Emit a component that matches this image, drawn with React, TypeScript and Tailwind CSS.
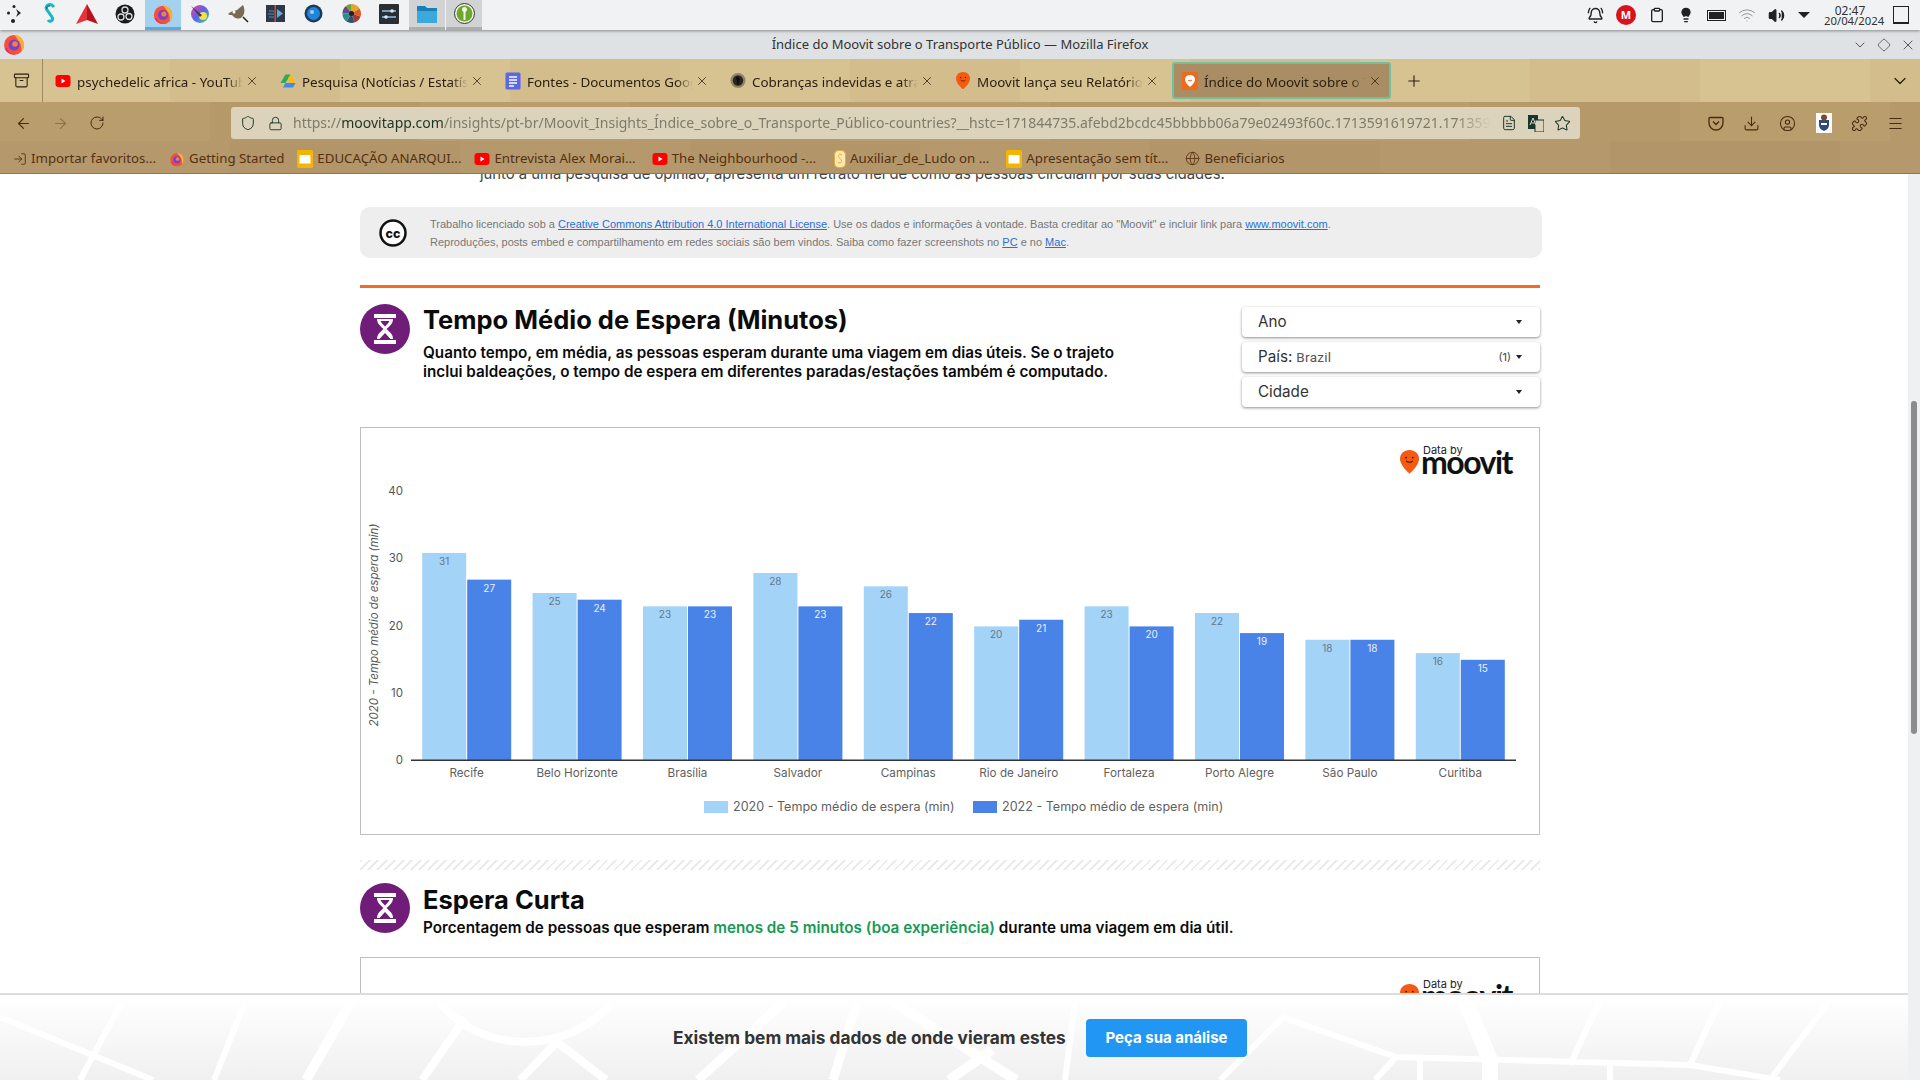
import type { ReactNode } from 'react';
import {
  ArrowLeft, ArrowRight, RotateCw, Shield, Lock, FileText, Star, Download, CircleUser, Puzzle, Menu, Plus, X,
  ChevronDown, Globe, BellRing, Clipboard, Lightbulb, Wifi, Volume2, LogIn, Archive, Diamond,
} from 'lucide-react';

const cities = [
  { name: 'Recife', a: 31, b: 27 },
  { name: 'Belo Horizonte', a: 25, b: 24 },
  { name: 'Brasília', a: 23, b: 23 },
  { name: 'Salvador', a: 28, b: 23 },
  { name: 'Campinas', a: 26, b: 22 },
  { name: 'Rio de Janeiro', a: 20, b: 21 },
  { name: 'Fortaleza', a: 23, b: 20 },
  { name: 'Porto Alegre', a: 22, b: 19 },
  { name: 'São Paulo', a: 18, b: 18 },
  { name: 'Curitiba', a: 16, b: 15 },
];

function FirefoxIcon({ size = 22 }: { size?: number }) {
  return (
    <svg width={size} height={size} viewBox="0 0 24 24">
      <circle cx="12" cy="13" r="10" fill="#f4503c" />
      <path d="M12 3c5 0 10 4 10 10 0 3-1 5-3 7 1-4 0-9-3-12-1-2-2-3-4-5z" fill="#ffb02e" />
      <path d="M3 17c2 4 6 6 10 5-4 0-7-2-8-6z" fill="#e0267f" />
      <circle cx="12" cy="13" r="5.5" fill="#7b3fd0" />
      <circle cx="13" cy="12" r="2.8" fill="#f0833a" />
    </svg>
  );
}

function YoutubeIcon() {
  return (
    <svg width="16" height="16" viewBox="0 0 16 16">
      <rect x="0.5" y="2" width="15" height="12" rx="3" fill="#f00" />
      <path d="M6.5 5.5v5l4-2.5z" fill="#fff" />
    </svg>
  );
}

function DriveIcon() {
  return (
    <svg width="16" height="16" viewBox="0 0 16 16">
      <path d="M5.5 1.5h5l-5 8.5h-5z" fill="#34a853" />
      <path d="M10.5 1.5l5 8.5h-5l-2.5-4.2z" fill="#fbbc04" />
      <path d="M3 14.5l2.5-4.5h10l-2.5 4.5z" fill="#4285f4" />
    </svg>
  );
}

function DocsIcon() {
  return (
    <svg width="16" height="18" viewBox="0 0 16 18">
      <rect x="0.5" y="0.5" width="15" height="17" rx="1.5" fill="#5a67e8" />
      <path d="M4 5h8M4 8h8M4 11h8M4 14h5" stroke="#fff" strokeWidth="1.4" />
    </svg>
  );
}

function SlidesIcon() {
  return (
    <svg width="16" height="18" viewBox="0 0 16 18">
      <rect x="0" y="0" width="16" height="18" rx="1.5" fill="#f4b400" />
      <rect x="2.5" y="5" width="11" height="8.5" fill="#fff" />
    </svg>
  );
}

function PinIcon({ size = 16 }: { size?: number }) {
  return (
    <svg width={size} height={size * 1.25} viewBox="0 0 20 25">
      <path d="M10 0c5.600 0 10 4 10 9.200 0 5.500-5 11-10 15.800C5 20.200 0 14.700 0 9.200 0 4 4.400 0 10 0z" fill="#f55a12" />
      <circle cx="6.500" cy="8" r="1" fill="#40170a" />
      <circle cx="13.500" cy="8" r="1" fill="#40170a" />
      <path d="M6.500 11.500c2 2 5 2 7 0" stroke="#40170a" strokeWidth="1.100" fill="none" />
    </svg>
  );
}

function PinTileIcon() {
  return (
    <svg width="16" height="18" viewBox="0 0 16 18">
      <rect width="16" height="18" rx="1" fill="#ef6a1c" />
      <path d="M8 3c2.800 0 5 2 5 4.600 0 2.800-2.500 5.400-5 7.400-2.500-2-5-4.600-5-7.400C3 5 5.200 3 8 3z" fill="#fff" />
      <path d="M6 8c1 1 3 1 4 0" stroke="#ef6a1c" fill="none" />
    </svg>
  );
}

function SpiralIcon() {
  return (
    <svg width="17" height="17" viewBox="0 0 17 17">
      <circle cx="8.500" cy="8.500" r="8" fill="#8d8468" />
      <circle cx="8.500" cy="8.500" r="5.500" fill="#2b2520" />
      <path d="M6.500 5c2-1.500 4 0 3.500 2.500L9 13H8L7 8z" fill="#0b0b0b" />
    </svg>
  );
}

function Taskbar() {
  const Slot = ({ children, state }: { children: ReactNode; state?: 'active' | 'open' }) => (
    <div
      className={`flex h-[30px] w-[36px] items-center justify-center border-b-[3px] mr-[1.700px] ${
        state === 'active'
          ? 'bg-[#a4d1ee] border-b-[#5aa9e0]'
          : state === 'open'
            ? 'bg-[#d2d3d5] border-b-[#adaeb0]'
            : 'border-b-transparent'
      }`}
    >
      {children}
    </div>
  );

  return (
    <div className="relative z-10 flex h-[30px] shrink-0 items-center justify-between bg-[#f1f2f3] shadow-[0_1px_3px_rgba(0,0,0,0.4)]">
      <div className="-ml-[6px] flex items-center">
        <Slot>
          <svg width="18" height="20" viewBox="0 0 18 20" fill="#222" className="ml-[5px]">
            <circle cx="8" cy="2.500" r="1.500" />
            <circle cx="2.500" cy="9" r="1.500" />
            <circle cx="7" cy="17" r="2" />
            <path d="M10 5l5 4-5 4 1.800-4z" />
          </svg>
        </Slot>
        <Slot>
          <svg width="14" height="22" viewBox="0 0 14 22" fill="none">
            <path d="M11 4C7-1 1 3 4 7l5 7c2 3-2 6-4 3" stroke="#14b8c9" strokeWidth="3" />
            <path d="M4 6c-1-2 1-3 3-3" stroke="#0a4f5c" strokeWidth="1" />
          </svg>
        </Slot>
        <Slot>
          <svg width="22" height="20" viewBox="0 0 22 20">
            <path d="M11 0l11 20-11-4z" fill="#b3141d" />
            <path d="M11 0L0 20l11-4z" fill="#e2343a" />
          </svg>
        </Slot>
        <Slot>
          <svg width="20" height="20" viewBox="0 0 20 20">
            <circle cx="10" cy="10" r="9.500" fill="#1b1b1b" />
            <circle cx="10" cy="6" r="3" fill="none" stroke="#ddd" strokeWidth="1.300" />
            <circle cx="6" cy="13" r="3" fill="none" stroke="#ddd" strokeWidth="1.300" />
            <circle cx="14" cy="12.500" r="3" fill="none" stroke="#ddd" strokeWidth="1.300" />
          </svg>
        </Slot>
        <Slot state="active">
          <FirefoxIcon />
        </Slot>
        <Slot>
          <svg width="20" height="20" viewBox="0 0 20 20">
            <defs>
              <linearGradient id="krita" x1="0" y1="0" x2="1" y2="1">
                <stop offset="0" stopColor="#f13fa0" />
                <stop offset="0.5" stopColor="#5c62e8" />
                <stop offset="1" stopColor="#33d9a5" />
              </linearGradient>
            </defs>
            <circle cx="10" cy="10" r="9" fill="url(#krita)" />
            <circle cx="13" cy="12" r="4" fill="#f4e24a" />
            <path d="M1 2l11 9-2 2z" fill="#4a3a3a" />
          </svg>
        </Slot>
        <Slot>
          <svg width="22" height="18" viewBox="0 0 22 18">
            <path d="M1 9c3-3 6-3 9-4l6-5c2 4 2 9-1 12-4 3-8 1-10-2-2 0-3 0-4-1z" fill="#7a6a52" />
            <circle cx="7" cy="7" r="1.500" fill="#fff" />
            <path d="M16 12l5 5" stroke="#222" strokeWidth="1.500" />
          </svg>
        </Slot>
        <Slot>
          <svg width="19" height="17" viewBox="0 0 19 17">
            <rect width="19" height="17" fill="#2b3a48" />
            <path d="M11 4l6 4.500-6 4.500z" fill="#6ea4cf" />
            <path d="M3 6h5M2 9h6M3 12h5" stroke="#5f89ab" />
            <rect x="8.500" y="0" width="1.500" height="17" fill="#d8483d" />
          </svg>
        </Slot>
        <Slot>
          <svg width="19" height="19" viewBox="0 0 19 19">
            <circle cx="9.500" cy="9.500" r="9" fill="#1d3a57" />
            <circle cx="9.500" cy="9.500" r="6.500" fill="#1f86d8" />
            <circle cx="8" cy="8" r="2" fill="#9ccfee" />
          </svg>
        </Slot>
        <Slot>
          <svg width="19" height="19" viewBox="0 0 19 19">
            <path d="M9.500 9.500L9.500 0a9.500 9.500 0 0 1 8 4.500z" fill="#e4a52c" />
            <path d="M9.500 9.500l8-5a9.500 9.500 0 0 1 1 8z" fill="#df5b2b" />
            <path d="M9.500 9.500l9 3a9.500 9.500 0 0 1-6 6z" fill="#a13b3b" />
            <path d="M9.500 9.500l3 9a9.500 9.500 0 0 1-8-1z" fill="#33506f" />
            <path d="M9.500 9.500l-5 8a9.500 9.500 0 0 1-4-8z" fill="#2d8c8c" />
            <path d="M9.500 9.500H.500A9.500 9.500 0 0 1 4 2z" fill="#5d4a87" />
            <path d="M9.500 9.500L4 2a9.500 9.500 0 0 1 5.500-2z" fill="#7a9a3f" />
            <circle cx="9.500" cy="9.500" r="2.500" fill="#222" />
          </svg>
        </Slot>
        <Slot>
          <svg width="20" height="20" viewBox="0 0 20 20">
            <rect width="20" height="20" rx="1" fill="#2a2e33" />
            <path d="M3 7h14M3 13h14" stroke="#8fc4ea" strokeWidth="1.500" />
            <circle cx="13" cy="7" r="1.800" fill="#dbe9f3" />
            <circle cx="7" cy="13" r="1.800" fill="#dbe9f3" />
          </svg>
        </Slot>
        <Slot state="open">
          <svg width="20" height="18" viewBox="0 0 20 18">
            <path d="M0 1h8l2 2h10v15H0z" fill="#1a7fb8" />
            <path d="M0 6h20v12H0z" fill="#3ba9dc" />
          </svg>
        </Slot>
        <Slot state="open">
          <svg width="21" height="21" viewBox="0 0 21 21">
            <circle cx="10.500" cy="10.500" r="10" fill="#f3f5ed" stroke="#2a3a2a" />
            <circle cx="10.500" cy="10.500" r="8" fill="#6da72c" />
            <circle cx="10.500" cy="6.500" r="2.500" fill="#f3f5ed" />
            <rect x="9.500" y="8" width="2" height="9" fill="#f3f5ed" />
          </svg>
        </Slot>
      </div>
      <div className="flex h-full items-center text-[#222]">
        <BellRing size={17} className="absolute left-[1587px]" />
        <div className="absolute left-[1616px] flex h-[20px] w-[20px] items-center justify-center rounded-full bg-[#d9131d] text-[11px] font-bold text-white">M</div>
        <Clipboard size={16} className="absolute left-[1649px]" />
        <Lightbulb size={16} fill="#222" className="absolute left-[1678px]" />
        <div className="absolute left-[1707px] h-[11px] w-[19px] border border-[#222] bg-[#222] shadow-[inset_0_0_0_1px_#f1f2f3]" />
        <Wifi size={18} strokeWidth={1} className="absolute left-[1738px] text-[#777]" />
        <Volume2 size={17} fill="#222" className="absolute left-[1768px]" />
        <div className="absolute left-[1798px] h-0 w-0 border-x-[6px] border-t-[6px] border-x-transparent border-t-[#222]" />
        <div className="absolute left-[1824px] top-[6px] w-[52px] text-center leading-[10px] text-[#333]">
          <div className="text-[12px]">02:47</div>
          <div className="text-[11.300px]">20/04/2024</div>
        </div>
        <div className="absolute left-[1893px] h-[18px] w-[16px] border border-[#222] border-b-2" />
      </div>
    </div>
  );
}

function TitleBar() {
  return (
    <div className="relative flex h-[29px] shrink-0 items-center justify-center bg-[#dfe2e4] text-[13px] text-[#333]">
      <div className="absolute left-[2px] top-[2px]">
        <FirefoxIcon size={24} />
      </div>
      Índice do Moovit sobre o Transporte Público — Mozilla Firefox
      <div className="absolute right-[4px] flex items-center gap-[9px] text-[#444]">
        <ChevronDown size={16} strokeWidth={1.300} />
        <Diamond size={14} strokeWidth={1.300} />
        <X size={16} strokeWidth={1.300} />
      </div>
    </div>
  );
}

const tabs = [
  { title: 'psychedelic africa - YouTube', icon: <YoutubeIcon /> },
  { title: 'Pesquisa (Notícias / Estatísticas)', icon: <DriveIcon /> },
  { title: 'Fontes - Documentos Google', icon: <DocsIcon /> },
  { title: 'Cobranças indevidas e atrasos', icon: <SpiralIcon /> },
  { title: 'Moovit lança seu Relatório Global', icon: <PinIcon size={14} /> },
  { title: 'Índice do Moovit sobre o Transporte', icon: <PinTileIcon />, active: true },
];

function TabBar() {
  return (
    <div className="flex h-[43px] shrink-0 items-center bg-[#d6c08f] bg-[repeating-linear-gradient(90deg,rgba(255,255,255,0.03)_0,rgba(255,255,255,0.03)_170px,rgba(120,90,30,0.03)_170px,rgba(120,90,30,0.03)_340px)] text-[13.400px] text-[#2b2112]">
      <div className="flex h-full w-[43px] items-center justify-center border-r border-r-[#9b8a62]">
        <Archive size={17} strokeWidth={1.500} />
      </div>
      <div className="flex items-center gap-[6px] pl-[4px]">
        {tabs.map((tab) => (
          <div
            key={tab.title}
            className={`flex h-[37px] w-[219px] items-center rounded-[3px] pl-[8px] pr-[7px] ${
              tab.active ? 'border-2 border-[#6fc0a0] bg-[#ab8d63] pl-[6px] pr-[5px]' : ''
            }`}
          >
            <span className="flex w-[16px] shrink-0 justify-center">{tab.icon}</span>
            <span className="ml-[6px] min-w-0 flex-1 overflow-hidden whitespace-nowrap pt-[4px] [mask-image:linear-gradient(90deg,#000_90%,transparent)]">
              {tab.title}
            </span>
            <X size={14} strokeWidth={1.300} className="ml-[2px] shrink-0" />
          </div>
        ))}
      </div>
      <Plus size={18} strokeWidth={1.500} className="ml-[14px]" />
      <div className="flex-1" />
      <ChevronDown size={20} strokeWidth={1.500} className="mr-[10px]" />
    </div>
  );
}

function NavBar() {
  return (
    <div className="flex h-[39px] shrink-0 items-center bg-[#b89b6a] bg-[repeating-linear-gradient(90deg,rgba(255,255,255,0.02)_0,rgba(255,255,255,0.02)_210px,rgba(90,60,20,0.02)_210px,rgba(90,60,20,0.02)_420px)] pt-[3px] text-[#4a2a10]">
      <div className="flex w-[231px] shrink-0 items-center gap-[20px] pl-[15px]">
        <ArrowLeft size={17} strokeWidth={1.500} />
        <ArrowRight size={17} strokeWidth={1.500} className="opacity-40" />
        <RotateCw size={16} strokeWidth={1.500} />
      </div>
      <div className="flex h-[32px] w-[1349px] shrink-0 items-center rounded-[3px] bg-[#dbd3bb] pl-[9px] pr-[6px] text-[#24382c]">
        <Shield size={16} strokeWidth={1.500} />
        <Lock size={15} strokeWidth={1.500} className="ml-[12px]" />
        <span className="ml-[10px] w-[1198px] overflow-hidden whitespace-nowrap pb-[2px] text-[14px] text-[#7f7b6a] [mask-image:linear-gradient(90deg,#000_97%,transparent)]">
          https://<span className="text-[#1f3327]">moovitapp.com</span>/insights/pt-br/Moovit_Insights_Índice_sobre_o_Transporte_Público-countries?__hstc=171844735.afebd2bcdc45bbbbb06a79e02493f60c.1713591619721.1713591619721
        </span>
        <FileText size={16} strokeWidth={1.500} className="ml-[10px]" />
        <svg width="16" height="17" viewBox="0 0 16 17" className="ml-[11px]">
          <rect x="0" y="0" width="10" height="14" fill="#17362c" />
          <rect x="7" y="5" width="9" height="12" fill="#dbd3bb" stroke="#17362c" />
          <path d="M2 10l3-7 3 7M3.200 8h3.600" stroke="#dbd3bb" strokeWidth="1" fill="none" />
        </svg>
        <Star size={17} strokeWidth={1.500} className="ml-[10px]" />
      </div>
      <div className="flex flex-1 items-center justify-between pl-[128px] pr-[16px]">
        <svg width="16" height="16" viewBox="0 0 16 16" fill="none" stroke="currentColor" strokeWidth="1.300">
          <path d="M2 2.500h12a1 1 0 0 1 1 1V8A7 7 0 0 1 1 8V3.500a1 1 0 0 1 1-1z" />
          <path d="M5 6.500l3 3 3-3" />
        </svg>
        <Download size={17} strokeWidth={1.500} />
        <CircleUser size={17} strokeWidth={1.500} />
        <svg width="16" height="20" viewBox="0 0 16 20">
          <rect width="16" height="20" fill="#fff" />
          <path d="M3 7h10v5c0 3-2 5-5 6-3-1-5-3-5-6z" fill="#2f4a78" />
          <circle cx="8" cy="4.500" r="3" fill="#7a4a2a" />
          <rect x="5" y="10" width="6" height="2" fill="#fff" />
        </svg>
        <Puzzle size={17} strokeWidth={1.500} />
        <Menu size={17} strokeWidth={1.500} />
      </div>
    </div>
  );
}

const bookmarks = [
  { title: 'Importar favoritos...', icon: <LogIn size={14} strokeWidth={1.500} />, gap: '' },
  { title: 'Getting Started', icon: <FirefoxIcon size={16} />, gap: '' },
  { title: 'EDUCAÇÃO ANARQUI...', icon: <SlidesIcon />, gap: '' },
  { title: 'Entrevista Alex Morai...', icon: <YoutubeIcon />, gap: '' },
  { title: 'The Neighbourhood -...', icon: <YoutubeIcon />, gap: 'ml-[3px]' },
  {
    title: 'Auxiliar_de_Ludo on ...',
    icon: (
      <svg width="12" height="18" viewBox="0 0 12 18">
        <rect x="0.500" y="0.500" width="11" height="17" rx="4" fill="#fbe9b0" stroke="#e8a93c" />
        <path d="M8 5C5 3 3 6 6 8.500s1 5.500-2 4" stroke="#e8a93c" fill="none" />
      </svg>
    ),
    gap: 'ml-[5px]',
  },
  { title: 'Apresentação sem tít...', icon: <SlidesIcon />, gap: 'ml-[4px]' },
  { title: 'Beneficiarios', icon: <Globe size={15} strokeWidth={1.300} />, gap: 'ml-[4px]' },
];

function BookmarksBar() {
  return (
    <div className="flex h-[33px] shrink-0 items-center gap-[13px] border-b border-b-[#8b7a4e] bg-[#b4976a] bg-[repeating-linear-gradient(90deg,rgba(255,255,255,0.02)_0,rgba(255,255,255,0.02)_230px,rgba(90,60,20,0.02)_230px,rgba(90,60,20,0.02)_460px)] pl-[13px] pt-[3px] text-[13.250px] text-[#54300f]">
      {bookmarks.map((b) => (
        <div key={b.title} className={`flex items-center gap-[4px] whitespace-nowrap ${b.gap}`}>
          {b.icon}
          <span>{b.title}</span>
        </div>
      ))}
    </div>
  );
}

function Hourglass() {
  return (
    <div className="flex h-[50px] w-[50px] shrink-0 items-center justify-center rounded-full bg-[#6f1d78]">
      <svg width="22" height="30" viewBox="0 0 22 30" fill="#fff">
        <rect x="0" y="0" width="22" height="4" />
        <rect x="0" y="26" width="22" height="4" />
        <path d="M3 5h16c0 5-3.500 7-6.500 10 3 3 6.500 5 6.500 10h-2.500L11 19l-5.500 6H3c0-5 3.500-7 6.500-10C6.500 12 3 10 3 5zm3.500 2c1 2 3 4 4.500 5.500C12.500 11 14.500 9 15.500 7z" />
      </svg>
    </div>
  );
}

function MoovitLogo({ top }: { top: string }) {
  return (
    <div className={`absolute right-[27px] flex items-start ${top}`}>
      <div className="mt-[7px] mr-[2px]">
        <PinIcon size={19} />
      </div>
      <div className="w-[91px]">
        <div className="ml-[2px] text-[11px] leading-[14px] text-[#222]">Data by</div>
        <div className="mt-[1px] font-['Lato',sans-serif] text-[32px] font-bold leading-[8px] tracking-[-1.500px] text-[#111]">moovit</div>
      </div>
    </div>
  );
}

function Chart() {
  const y = (v: number) => 760 - v * 6.72;
  const bar = (v: number) => 760 - v * 6.68;
  return (
    <div className="relative h-[408px] border border-[#bfbfbf]">
      <MoovitLogo top="top-[15px]" />
      <svg viewBox="361 428 1178 406" className="h-[406px] w-[1178px]" fontFamily="Inter, sans-serif">
        {[0, 10, 20, 30, 40].map((v) => (
          <text key={v} x={403} y={y(v) + 4} textAnchor="end" fontSize="11.500" fill="#555">{v}</text>
        ))}
        <text
          transform="translate(378 625) rotate(-90)"
          textAnchor="middle"
          fontSize="11.500"
          fontStyle="italic"
          fill="#555"
        >
          2020 - Tempo médio de espera (min)
        </text>
        {cities.map((c, i) => {
          const cx = 466.7 + 110.4 * i;
          return (
            <g key={c.name}>
              <rect x={cx - 44.500} y={bar(c.a)} width={44} height={760 - bar(c.a)} fill="#a4d3f8" />
              <rect x={cx + 0.500} y={bar(c.b)} width={44} height={760 - bar(c.b)} fill="#4a83e8" />
              <text x={cx - 22.500} y={bar(c.a) + 12} textAnchor="middle" fontSize="10" fill="#667788">{c.a}</text>
              <text x={cx + 22.500} y={bar(c.b) + 12} textAnchor="middle" fontSize="10" fill="#e8f0fc">{c.b}</text>
              <text x={cx} y={777} textAnchor="middle" fontSize="11.700" fill="#5f5f5f">{c.name}</text>
            </g>
          );
        })}
        <rect x={411} y={759.500} width={1105} height={1.500} fill="#333" />
        <rect x={704} y={801} width={24} height={12} fill="#a4d3f8" />
        <text x={733} y={811} fontSize="12.550" fill="#5f5f5f">2020 - Tempo médio de espera (min)</text>
        <rect x={973} y={801} width={24} height={12} fill="#4a83e8" />
        <text x={1002} y={811} fontSize="12.550" fill="#5f5f5f">2022 - Tempo médio de espera (min)</text>
      </svg>
    </div>
  );
}

function Filter({ label, value, count }: { label: string; value?: string; count?: string }) {
  return (
    <div className="flex h-[30px] items-center rounded-[4px] bg-white pl-[16px] pr-[18px] text-[15.200px] text-[#333] shadow-[0_1px_3px_rgba(0,0,0,0.45)]">
      <span>{label}</span>
      {value && <span className="ml-[4px] font-['Roboto',sans-serif] text-[13.500px] tracking-[0.3px] text-[#555]">{value}</span>}
      <div className="flex-1" />
      {count && <span className="mr-[5px] text-[11px] text-[#444]">{count}</span>}
      <div className="h-0 w-0 border-x-[3.500px] border-t-[4px] border-x-transparent border-t-[#222]" />
    </div>
  );
}

function Page() {
  return (
    <div className="relative flex-1 overflow-hidden bg-white font-['Inter',sans-serif]">
      <div className="-mt-[10px] ml-[480px] whitespace-nowrap text-[14.800px] leading-[20px] text-[#444]">
        junto a uma pesquisa de opinião, apresenta um retrato fiel de como as pessoas circulam por suas cidades.
      </div>
      <div className="ml-[360px] w-[1180px]">
        <div className="mt-[23px] flex h-[51px] w-[1182px] items-center rounded-[10px] bg-[#eeeeee] pl-[19px]">
          <svg width="28" height="28" viewBox="0 0 28 28" className="shrink-0">
            <circle cx="14" cy="14" r="12.500" fill="#fff" stroke="#111" strokeWidth="2.500" />
            <text x="14" y="18.500" textAnchor="middle" fontSize="12.500" fontWeight="800" fontFamily="Inter, sans-serif" fill="#111">cc</text>
          </svg>
          <div className="ml-[23px] pt-[1px] font-['Liberation_Sans',sans-serif] text-[11px] leading-[18px] text-[#777]">
            <div>
              Trabalho licenciado sob a <span className="text-[#2a6fd6] underline">Creative Commons Attribution 4.0 International License</span>. Use os dados e informações à vontade. Basta creditar ao "Moovit" e incluir link para <span className="text-[#2a6fd6] underline">www.moovit.com</span>.
            </div>
            <div>
              Reproduções, posts embed e compartilhamento em redes sociais são bem vindos. Saiba como fazer screenshots no <span className="text-[#2a6fd6] underline">PC</span> e no <span className="text-[#2a6fd6] underline">Mac</span>.
            </div>
          </div>
        </div>

        <div className="mt-[27px] h-[3px] bg-[#f26c22]" />

        <div className="mt-[16px] flex h-[123px]">
          <Hourglass />
          <div className="ml-[13px] flex-1">
            <h2 className="mt-[1px] text-[25.500px] font-bold leading-[30px] text-[#0b0b0b]">Tempo Médio de Espera (Minutos)</h2>
            <p className="mt-[9px] w-[710px] text-[15.250px] font-semibold leading-[18.500px] text-[#0b0b0b]">
              Quanto tempo, em média, as pessoas esperam durante uma viagem em dias úteis. Se o trajeto inclui baldeações, o tempo de espera em diferentes paradas/estações também é computado.
            </p>
          </div>
          <div className="mt-[3px] flex w-[298px] flex-col gap-[5px]">
            <Filter label="Ano" />
            <Filter label="País:" value="Brazil" count="(1)" />
            <Filter label="Cidade" />
          </div>
        </div>

        <Chart />

        <div className="mt-[25px] h-[10px] bg-[repeating-linear-gradient(135deg,#ebebeb_0,#ebebeb_2px,transparent_2px,transparent_6px)]" />

        <div className="mt-[13px] flex h-[74px]">
          <Hourglass />
          <div className="ml-[13px]">
            <h2 className="mt-[2px] text-[25.500px] font-bold leading-[30px] text-[#0b0b0b]">Espera Curta</h2>
            <p className="mt-[4px] whitespace-nowrap text-[15.250px] font-semibold leading-[18px] text-[#0b0b0b]">
              Porcentagem de pessoas que esperam <span className="text-[#169a56]">menos de 5 minutos (boa experiência)</span> durante uma viagem em dia útil.
            </p>
          </div>
        </div>

        <div className="relative h-[200px] border border-[#bfbfbf]">
          <MoovitLogo top="top-[19px]" />
        </div>
      </div>

      {/* Sticky call to action */}
      <div className="absolute inset-x-0 bottom-0 h-[87px] overflow-hidden border-t-2 border-t-[#dcdcdc] bg-gradient-to-b from-white to-[#f0f0f1]">
        <svg viewBox="0 0 1908 85" className="absolute inset-0 h-[85px] w-[1908px]" fill="none" stroke="#fff" strokeWidth="6">
          <path d="M0 22L153 85M122 7L80 85M245 7L214 85" />
          <path d="M355 0L306 85" strokeWidth="10" />
          <path d="M440 7C480 60 570 60 612 7M465 23L422 85M557 47L520 85M557 47L606 85" strokeWidth="8" />
          <path d="M784 7L698 85M857 7L833 85" strokeWidth="9" />
          <path d="M882 0L1016 85M992 55L949 85" strokeWidth="10" />
          <path d="M1075 7L1065 85M1282 22L1396 62L1690 70L1780 85M1283 22L1220 85M1396 62L1375 85" />
          <path d="M1465 5L1490 65L1490 85" strokeWidth="16" />
          <path d="M1600 5L1570 70M1720 5L1690 70M1830 5L1770 85M1420 65L1420 85M1610 66L1610 85" />
        </svg>
        <div className="relative ml-[673px] flex h-full items-center">
          <span className="whitespace-nowrap text-[17.300px] font-bold text-[#333]">Existem bem mais dados de onde vieram estes</span>
          <button className="absolute left-[413px] top-[24px] h-[38px] w-[161px] rounded-[4px] bg-[#2196f3] text-[15px] font-bold text-white">Peça sua análise</button>
        </div>
      </div>
    </div>
  );
}

export default function App() {
  return (
    <div className="flex h-[1080px] w-[1920px] flex-col overflow-hidden bg-white font-['Noto_Sans',sans-serif]">
      <Taskbar />
      <TitleBar />
      <TabBar />
      <NavBar />
      <BookmarksBar />
      <div className="flex min-h-0 flex-1">
        <Page />
        <div className="relative w-[12px] shrink-0 bg-[#eff0f1]">
          <div className="absolute left-[3px] top-[227px] h-[333px] w-[6px] rounded-full bg-[#8b8c8e]" />
        </div>
      </div>
    </div>
  );
}
